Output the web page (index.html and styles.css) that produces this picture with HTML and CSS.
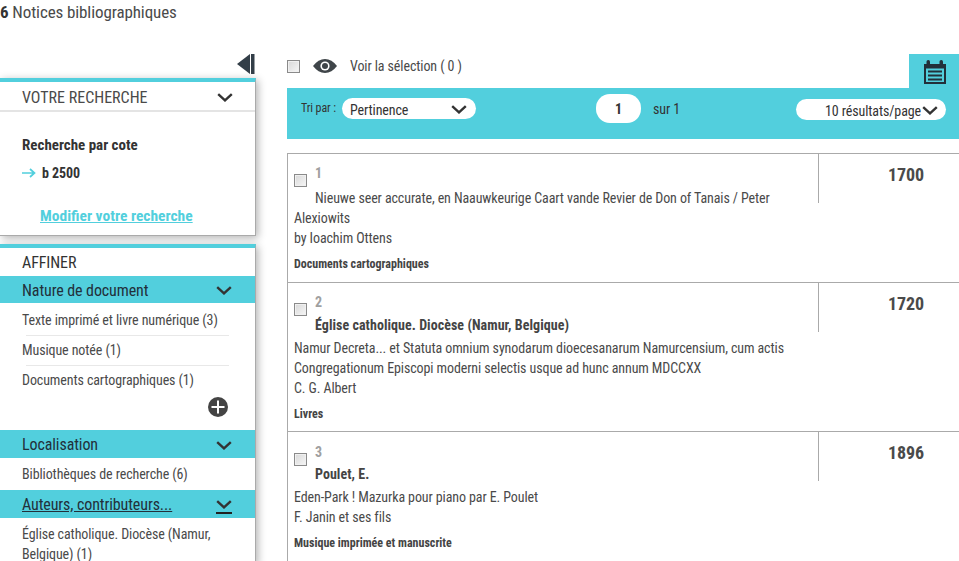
FILE: index.html
```html
<!DOCTYPE html>
<html lang="fr">
<head>
<meta charset="utf-8">
<title>Notices bibliographiques</title>
<link rel="stylesheet" href="styles.css">
</head>
<body>
<svg class="defs" width="0" height="0"><defs>
<symbol id="chev" viewBox="0 0 16 9"><path d="M1.2 1.200 8 7.400l6.800-6.200" fill="none" stroke="currentColor" stroke-width="2.400"/></symbol>
</defs></svg>
<h1 class="page-title"><b>6</b> Notices bibliographiques</h1>
<div class="columns">
  <aside class="sidebar">
    <div class="toggle"><svg width="18" height="21" viewBox="0 0 18 21"><path d="M13 0v20L0 10z" fill="#333e48"/><rect x="14" y="0" width="3.500" height="20" fill="#333e48"/></svg></div>
    <section class="box search">
      <div class="search-head"><span>VOTRE RECHERCHE</span><svg class="chev" width="16" height="9"><use href="#chev"/></svg></div>
      <div class="search-body">
        <p class="search-type">Recherche par cote</p>
        <p class="search-term"><svg width="14" height="10" viewBox="0 0 14 10"><path d="M0 5h12M8 1l4.500 4L8 9" fill="none" stroke="#52cfdd" stroke-width="1.700"/></svg><b>b 2500</b></p>
        <a class="modify" href="#">Modifier votre recherche</a>
      </div>
    </section>
    <section class="box refine">
      <div class="refine-title">AFFINER</div>
      <div class="facet-head"><span>Nature de document</span><svg class="chev" width="16" height="9"><use href="#chev"/></svg></div>
      <ul class="facet-list">
        <li>Texte imprimé et livre numérique (3)</li>
        <li>Musique notée (1)</li>
        <li>Documents cartographiques (1)</li>
      </ul>
      <div class="more"><svg width="20" height="20" viewBox="0 0 20 20"><circle cx="10" cy="10" r="10" fill="#444"/><path d="M10 3.500v13M3.500 10h13" stroke="#fff" stroke-width="2"/></svg></div>
      <div class="facet-head gap"><span>Localisation</span><svg class="chev" width="16" height="9"><use href="#chev"/></svg></div>
      <div class="facet-one">Bibliothèques de recherche (6)</div>
      <div class="facet-head active"><span>Auteurs, contributeurs...</span><svg class="chev" width="16" height="9"><use href="#chev"/></svg></div>
      <div class="facet-wrap">Église catholique. Diocèse (Namur, Belgique) (1)</div>
    </section>
  </aside>
  <main class="content">
    <div class="select-row">
      <input type="checkbox" class="check">
      <svg class="eye" width="24" height="14" viewBox="0 0 24 14"><path d="M0 7C3.500 2.500 7.500 0 12 0s8.500 2.500 12 7c-3.500 4.500-7.500 7-12 7S3.500 11.500 0 7z" fill="#3f4549"/><circle cx="12" cy="7" r="4.600" fill="#fff"/><circle cx="12" cy="7" r="3" fill="#3f4549"/></svg>
      <span>Voir la sélection ( 0 )</span>
      <div class="tab"><svg width="24" height="24" viewBox="0 0 24 24"><path d="M2 5h20v18H2z" fill="none" stroke="#22303a" stroke-width="2"/><path d="M1 4h22v4.500H1z" fill="#22303a"/><rect x="3.500" y="0" width="3.500" height="5" rx="1.700" fill="#22303a"/><rect x="16.500" y="0" width="3.500" height="5" rx="1.700" fill="#22303a"/><path d="M5 11.500h14M5 15.500h14M5 19.500h14" stroke="#22303a" stroke-width="2"/></svg></div>
    </div>
    <div class="toolbar">
      <span class="sort-label">Tri par :</span>
      <div class="pill sort"><span>Pertinence</span><svg class="chev" width="16" height="9"><use href="#chev"/></svg></div>
      <div class="pager"><span class="page-num">1</span><span>sur 1</span></div>
      <div class="pill perpage"><span>10 résultats/page</span><svg class="chev" width="16" height="9"><use href="#chev"/></svg></div>
    </div>
    <div class="results">
      <article class="notice">
        <div class="date">1700</div>
        <input type="checkbox" class="check notice-check">
        <div class="num">1</div>
        <div class="lines first-title">Nieuwe seer accurate, en Naauwkeurige Caart vande Revier de Don of Tanais / Peter<br>Alexiowits<br>by Ioachim Ottens</div>
        <div class="kind">Documents cartographiques</div>
      </article>
      <article class="notice">
        <div class="date">1720</div>
        <input type="checkbox" class="check notice-check">
        <div class="num">2</div>
        <div class="author">Église catholique. Diocèse (Namur, Belgique)</div>
        <div class="lines">Namur Decreta... et Statuta omnium synodarum dioecesanarum Namurcensium, cum actis<br>Congregationum Episcopi moderni selectis usque ad hunc annum MDCCXX<br>C. G. Albert</div>
        <div class="kind">Livres</div>
      </article>
      <article class="notice">
        <div class="date">1896</div>
        <input type="checkbox" class="check notice-check">
        <div class="num">3</div>
        <div class="author">Poulet, E.</div>
        <div class="lines">Eden-Park ! Mazurka pour piano par E. Poulet<br>F. Janin et ses fils</div>
        <div class="kind">Musique imprimée et manuscrite</div>
      </article>
    </div>
  </main>
</div>
</body>
</html>
```
FILE: styles.css
```css
* { box-sizing: border-box; }
html, body { margin: 0; padding: 0; height: 561px; overflow: hidden; background: #fff; }
body { font-family: "Roboto Condensed", "Liberation Sans Narrow", Roboto, sans-serif; font-stretch: condensed; font-size: 14px; line-height: 20px; color: #4a4a4a; letter-spacing: -0.1px; }
.defs { position: absolute; }
p { margin: 0; }
.chev { color: #333; flex: none; }
.page-title { margin: 0; height: 54px; padding-top: 2px; font-size: 17px; font-weight: 400; line-height: 20px; }
.page-title b { color: #333; }
.columns { display: flex; gap: 31px; }
.sidebar { width: 256px; flex: none; }
.toggle { height: 24px; display: flex; justify-content: flex-end; padding-right: 1px; }
.box { background: #fff; border-top: 4px solid #52cfdd; border-right: 1px solid #aaa; box-shadow: 2px 2px 8px rgba(0,0,0,.3); }
.search { height: 158px; margin-bottom: 8px; border-bottom: 1px solid #aaa; }
.search-head { height: 30px; border-bottom: 2px solid #e4e4e4; display: flex; align-items: center; justify-content: space-between; padding: 3px 22px 0; font-size: 16px; letter-spacing: 0; }
.search-body { padding: 23px 22px 0; color: #333; }
.search-type { font-weight: 700; font-size: 15px; letter-spacing: 0; }
.search-term { margin-top: 8px; display: flex; align-items: center; gap: 6px; }
.modify { display: block; margin: 23px 0 0 18px; color: #52cfdd; font-size: 15.500px; font-weight: 700; text-decoration: underline; letter-spacing: 0; }
.refine-title { height: 28px; line-height: 30px; padding-left: 22px; font-size: 16px; color: #333; }
.facet-head { height: 27px; background: #52cfdd; display: flex; align-items: center; justify-content: space-between; padding: 2px 23px 0 22px; font-size: 16px; color: #22303a; }
.facet-head.gap { height: 28px; margin-top: 11px; }
.facet-head.active { height: 28px; }
.facet-head.active span { text-decoration: underline; }
.facet-head.active .chev { box-sizing: content-box; height: 9px; padding-bottom: 3px; border-bottom: 2px solid #222; margin-top: 3px; }
.facet-list { list-style: none; margin: 0; padding: 2px 0 0; }
.facet-list li { height: 30px; line-height: 30px; padding: 0 26px 0 22px; position: relative; }
.facet-list li + li { background: linear-gradient(#e8e8e8, #e8e8e8) 26px 0 / 203px 1px no-repeat; }
.more { height: 24px; padding: 2px 27px 0 0; display: flex; justify-content: flex-end; }
.facet-one { height: 32px; line-height: 32px; padding-left: 22px; }
.facet-wrap { padding: 6px 30px 0 22px; }
.content { flex: 1; min-width: 0; }
.select-row { height: 34px; padding-bottom: 10px; display: flex; align-items: center; position: relative; }
.check { appearance: none; margin: 0; width: 13px; height: 13px; border: 1px solid #8a8a8a; background: linear-gradient(135deg, #d8d8d8, #f6f6f6); box-shadow: inset 0 0 0 1px #f0f0f0; flex: none; }
.eye { margin-left: 13px; margin-right: 13px; }
.tab { position: absolute; right: 0; top: 0; width: 50px; height: 34px; background: #52cfdd; padding: 6px 0 0 14px; }
.toolbar { height: 51px; background: #52cfdd; position: relative; display: flex; align-items: flex-start; color: #333; }
.sort-label { margin: 10px 0 0 14px; font-size: 12px; }
.pill { background: #fff; border-radius: 11px; height: 21px; display: flex; align-items: center; color: #333; }
.sort { margin: 10px 0 0 6px; width: 134px; padding: 2px 9px 0 8px; justify-content: space-between; }
.pager { margin: 6px 0 0 120px; display: flex; align-items: center; gap: 12px; height: 29px; }
.page-num { width: 45px; height: 29px; border-radius: 14px; background: #fff; text-align: center; line-height: 31px; font-weight: 700; }
.perpage { margin: 11px 0 0 116px; width: 150px; padding: 2px 0 0 29px; gap: 1px; }
.results { margin-top: 14px; border-left: 1px solid #aaa; }
.notice { border-top: 1px solid #aaa; position: relative; padding: 9px 0 0 6px; }
.notice:nth-child(1) { height: 129px; }
.notice:nth-child(2) { height: 149px; }
.notice:nth-child(3) { height: 149px; padding-top: 10px; }
.notice:nth-child(3) .date { margin-top: -10px; }
.notice:nth-child(3) .author { margin-top: 2px; }
.date { float: right; width: 141px; height: 49px; margin-top: -9px; border-left: 1px solid #aaa; padding: 11px 0 0 34px; text-align: center; font-size: 18px; font-weight: 700; color: #4a4a4a; }
.notice-check { float: left; margin: 11px 8px 0 0; }
.num { font-weight: 700; color: #a0a0a0; padding-left: 21px; }
.author { font-weight: 700; padding-left: 21px; margin-top: 3px; color: #444; letter-spacing: 0.05px; }
.lines { clear: left; margin-top: 3px; }
.first-title { clear: none; text-indent: 21px; margin-top: 5px; }
.kind { font-size: 12px; font-weight: 700; margin-top: 6px; color: #444; letter-spacing: 0; }
```
